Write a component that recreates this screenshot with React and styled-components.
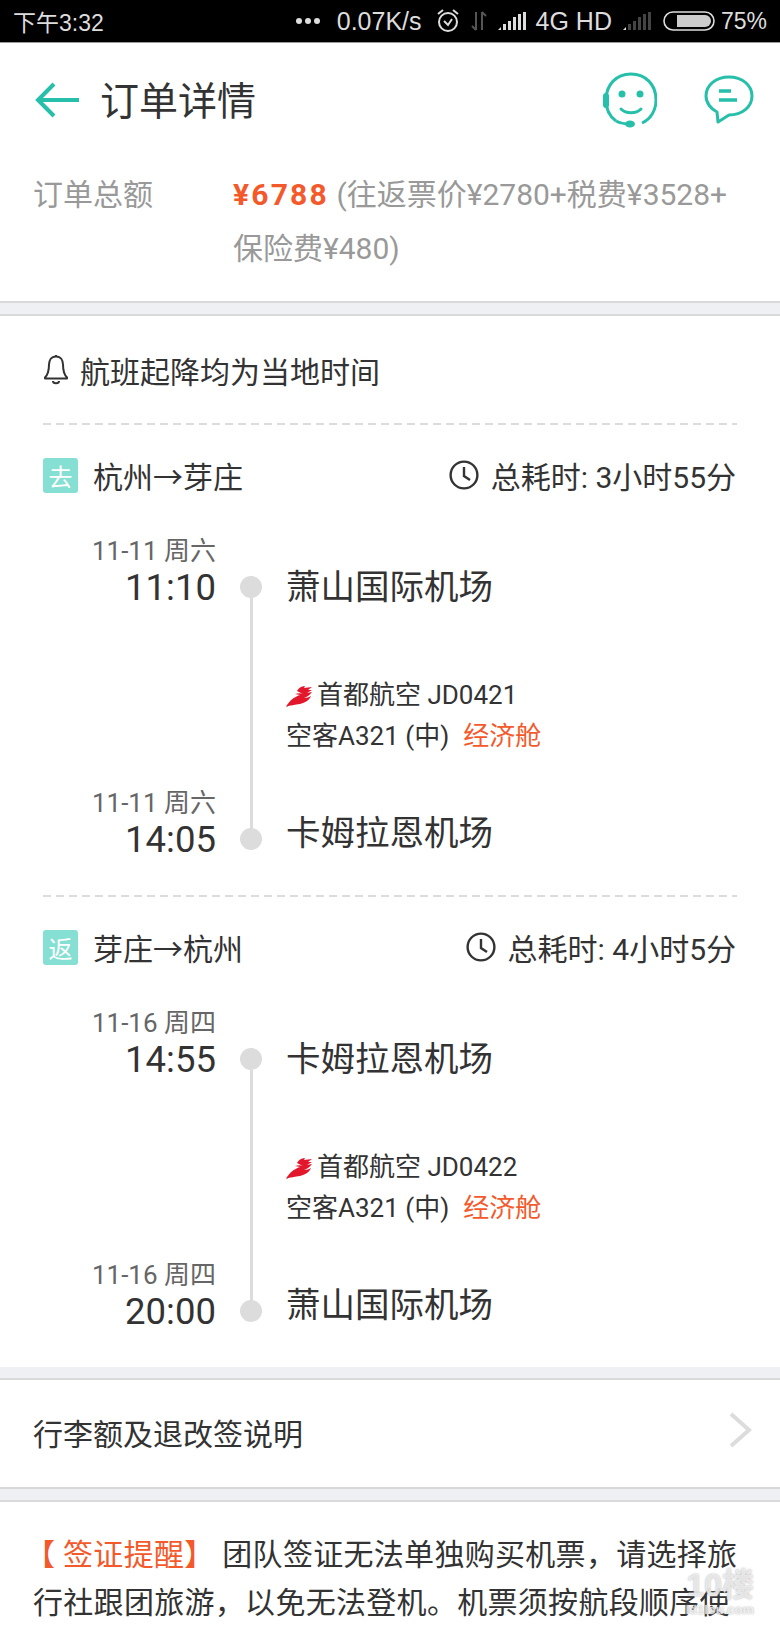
import React from 'react';
import styled, { createGlobalStyle } from 'styled-components';

const GlobalStyle = createGlobalStyle`
  html, body {
    margin: 0;
    padding: 0;
    background: #fff;
    height: 1625px;
    overflow: hidden;
  }
  body {
    font-family: Roboto, "Noto Sans CJK SC", sans-serif;
  }
`;

const TEAL = '#26bfa9';
const ORANGE = '#f4592b';

const Page = styled.div`
  position: relative;
  width: 780px;
  height: 1625px;
  overflow: hidden;
  background: #fff;
  color: #333;
`;

const StatusBar = styled.div`
  height: 43px;
  box-sizing: border-box;
  background: #000;
  border-bottom: 1px solid #999;
  display: flex;
  align-items: center;
  justify-content: space-between;
  padding: 0 13px;
  color: #ddd;
  font-size: 23px;
  font-family: "Liberation Sans", "Noto Sans CJK SC", sans-serif;
`;

const StatusRight = styled.div`
  display: flex;
  align-items: center;
  gap: 10px;
`;

const StatusText = styled.span`
  font-size: ${p => p.$big ? 25 : 23}px;
  margin: ${p => p.$margin || 0};
  white-space: nowrap;
`;

const Header = styled.header`
  height: 114px;
  display: flex;
  align-items: center;
  padding: 0 26px 0 35px;
`;

const Title = styled.h1`
  margin: 0 0 4px 21px;
  font-size: 39px;
  font-weight: 400;
  color: #333;
  flex: 1;
`;

const HeaderIcons = styled.div`
  display: flex;
  align-items: center;
  gap: 47px;
`;

const Total = styled.section`
  display: grid;
  grid-template-columns: 200px 1fr;
  padding: 11px 25px 25px 33px;
  font-size: 30px;
  line-height: 54px;
  color: #999;
`;

const Price = styled.b`
  color: ${ORANGE};
  font-weight: 700;
  letter-spacing: 2.2px;
`;

const Divider = styled.div`
  height: ${p => p.$h || 15}px;
  box-sizing: border-box;
  background: #eef0f3;
  border-top: ${p => p.$top ? '2px solid #d9d9d9' : 'none'};
  border-bottom: ${p => p.$bottom ? '2px solid #d9d9d9' : 'none'};
`;

const Flights = styled.section`
  padding: 0 43px;
`;

const Notice = styled.div`
  height: 107px;
  display: flex;
  align-items: center;
  gap: 11px;
  font-size: 30px;
  color: #333;
`;

const Dashed = styled.div`
  height: 2px;
  background: repeating-linear-gradient(to right, #dcdcdc 0 8px, transparent 8px 13px);
`;

const Leg = styled.div`
  height: 472px;
`;

const LegHead = styled.div`
  display: flex;
  align-items: center;
  justify-content: space-between;
  height: 35px;
  margin: 32px 0 45px;
`;

const Route = styled.div`
  display: flex;
  align-items: center;
  gap: 15px;
  font-size: 30px;
`;

const Badge = styled.span`
  width: 35px;
  height: 35px;
  margin-top: 1px;
  border-radius: 3px;
  background: #85e0d3;
  color: #fff;
  font-size: 24px;
  display: flex;
  align-items: center;
  justify-content: center;
`;

const Duration = styled.div`
  display: flex;
  align-items: center;
  gap: 12px;
  font-size: 30px;
  margin-right: 1px;
`;

const Timeline = styled.div`
  display: flex;
  height: 326px;
`;

const TimeCol = styled.div`
  width: 173px;
  display: flex;
  flex-direction: column;
  justify-content: space-between;
  text-align: right;
`;

const DateText = styled.div`
  font-size: 26px;
  line-height: 28px;
  color: #666;
`;

const TimeText = styled.div`
  font-size: 36.5px;
  line-height: 46px;
  color: #333;
`;

const Rail = styled.div`
  width: 70px;
  flex: none;
  display: flex;
  flex-direction: column;
  align-items: center;
  padding: 39px 0 13px;
  box-sizing: border-box;
`;

const Dot = styled.span`
  flex: none;
  width: 22px;
  height: 22px;
  border-radius: 50%;
  background: #dcdcdc;
`;

const RailLine = styled.span`
  flex: 1;
  width: 3px;
  background: #dcdcdc;
`;

const InfoCol = styled.div`
  flex: 1;
  display: flex;
  flex-direction: column;
  justify-content: space-between;
  padding: 27px 0 7px;
`;

const Airport = styled.div`
  font-size: 34.5px;
  line-height: 46px;
  color: #333;
`;

const Transit = styled.div`
  margin-top: 12px;
  font-size: 26px;
  line-height: 41px;
  color: #333;
`;

const Airline = styled.div`
  display: flex;
  align-items: center;
  gap: 5px;
`;

const Cabin = styled.span`
  color: ${ORANGE};
  margin-left: 14px;
`;

const LinkRow = styled.div`
  height: 107px;
  box-sizing: border-box;
  padding: 0 28px 3px 33px;
  display: flex;
  align-items: center;
  justify-content: space-between;
  font-size: 30px;
  color: #333;
`;

const ChevronSvg = styled.svg`
  margin-bottom: 4px;
`;

const Visa = styled.section`
  padding: 29px 25px 0 33px;
  font-size: 30px;
  line-height: 48px;
  letter-spacing: 0.3px;
  color: #333;
`;

const VisaTag = styled.span`
  color: ${ORANGE};
  margin-left: -8px;
`;

const Watermark = styled.div`
  position: absolute;
  right: 26px;
  bottom: 9px;
  color: rgba(255, 255, 255, 0.7);
  text-shadow: 0 0 2px rgba(160, 160, 160, 0.9);
  text-align: right;
  font-family: "Liberation Sans", sans-serif;
  font-weight: 700;
  line-height: 1;
`;

const MarkBig = styled.div`
  font-size: 32px;
  font-family: "Liberation Sans", "Noto Sans CJK SC", sans-serif;
`;

const MarkSmall = styled.div`
  font-size: 13px;
  margin-top: 2px;
`;

const BatterySvg = styled.svg`
  margin: 0 -4px 0 2px;
`;

const BackIcon = () => (
  <svg width="44" height="36" viewBox="0 0 44 36" fill="none" stroke={TEAL} strokeWidth="4">
    <path d="M44 18H3M19 2 3 18l16 16" />
  </svg>
);

const AgentIcon = () => (
  <svg width="54" height="56" viewBox="0 0 54 56" fill="none" stroke={TEAL} strokeWidth="3">
    <path d="M13 49C6 44 3 36 3 28 3 13 13 2 28 2s25 11 25 26c0 10-5 19-14 23" />
    <path d="M18 37c5 5 15 5 20 0" strokeLinecap="round" />
    <circle cx="19" cy="22" r="3.5" fill={TEAL} stroke="none" />
    <circle cx="37" cy="22" r="3.5" fill={TEAL} stroke="none" />
    <rect x="0" y="21" width="6" height="15" rx="3" fill={TEAL} stroke="none" />
    <path d="M13 49c4 2 8 3 14 3" />
    <ellipse cx="27" cy="52" rx="5" ry="3.5" fill={TEAL} stroke="none" />
  </svg>
);

const ChatIcon = () => (
  <svg width="50" height="50" viewBox="0 0 50 50" fill="none" stroke={TEAL} strokeWidth="3">
    <path d="M25 2C12 2 2 10 2 21c0 7 5 13 11 16l1 10 11-7c13 0 23-8 23-19S38 2 25 2z" strokeLinejoin="round" />
    <path d="M15 16h12M15 25h18" strokeWidth="3.5" />
  </svg>
);

const BellIcon = () => (
  <svg width="26" height="32" viewBox="0 0 26 32" fill="none" stroke="#333" strokeWidth="2">
    <path d="M13 2.5c-5 0-7 4-7 8 0 7-1 10-4 13v1h22v-1c-3-3-4-6-4-13 0-4-2-8-7-8z" strokeLinejoin="round" />
    <path d="M13 1v2M10 27c0 3 6 3 6 0" />
  </svg>
);

const ClockIcon = () => (
  <svg width="30" height="30" viewBox="0 0 30 30" fill="none" stroke="#333" strokeWidth="2.4">
    <circle cx="15" cy="15" r="13.4" />
    <path d="M15 7v9l6 4" />
  </svg>
);

const AirlineLogo = () => (
  <svg width="26" height="22" viewBox="0 0 26 22">
    <path fill="#e3172c" d="M0 22c3-6 8-10 14-12l-5-1c3-1 6-1 8 0l-6-3c1-2 4-5 8-5l-1 2 8-1-4 3 4 0-5 3 5-1c-2 3-5 5-8 6 3 0 5-1 7-2-2 5-7 7-11 8-5 1-10 1-14 3z" />
  </svg>
);

const Chevron = () => (
  <ChevronSvg width="24" height="36" viewBox="0 0 24 36" fill="none" stroke="#dcdcdc" strokeWidth="4">
    <path d="M3 2l18 16L3 34" />
  </ChevronSvg>
);

const Dots = () => (
  <svg width="26" height="8" viewBox="0 0 26 8" fill="#ddd">
    <circle cx="4" cy="4" r="3" /><circle cx="13" cy="4" r="3" /><circle cx="22" cy="4" r="3" />
  </svg>
);

const Alarm = () => (
  <svg width="24" height="26" viewBox="0 0 24 26" fill="none" stroke="#ddd" strokeWidth="2">
    <circle cx="12" cy="14" r="9" />
    <path d="M8 13l4 4 4-6M2 6l5-4M22 6l-5-4" />
  </svg>
);

const DataArrows = () => (
  <svg width="18" height="22" viewBox="0 0 18 22" fill="none" stroke="#555" strokeWidth="2">
    <path d="M6 2v18M2 16l4 4M12 20V2M12 2l4 4" />
  </svg>
);

const Signal = ({ dim }) => (
  <svg width="28" height="18" viewBox="0 0 28 18" fill={dim ? '#444' : '#ddd'}>
    <path d="M0 18l3-3v3z" fill="#ddd" />
    <rect x="5" y="12" width="3" height="6" />
    <rect x="10" y="9" width="3" height="9" />
    <rect x="15" y="5" width="3" height="13" />
    <rect x="20" y="2" width="3" height="16" />
    <rect x="25" y="0" width="3" height="18" />
  </svg>
);

const Battery = () => (
  <BatterySvg width="52" height="20" viewBox="0 0 52 20">
    <rect x="1" y="1" width="50" height="18" rx="9" fill="none" stroke="#ddd" strokeWidth="1.6" />
    <path d="M14 4h28a6 6 0 0 1 0 12H14z" fill="#ccc" />
  </BatterySvg>
);

const legs = [
  {
    tag: '去',
    route: '杭州→芽庄',
    total: '总耗时: 3小时55分',
    from: { date: '11-11 周六', time: '11:10', name: '萧山国际机场' },
    to: { date: '11-11 周六', time: '14:05', name: '卡姆拉恩机场' },
    flight: 'JD0421',
  },
  {
    tag: '返',
    route: '芽庄→杭州',
    total: '总耗时: 4小时5分',
    from: { date: '11-16 周四', time: '14:55', name: '卡姆拉恩机场' },
    to: { date: '11-16 周四', time: '20:00', name: '萧山国际机场' },
    flight: 'JD0422',
  },
];

const FlightLeg = ({ leg }) => (
  <Leg>
    <Dashed />
    <LegHead>
      <Route>
        <Badge>{leg.tag}</Badge>
        {leg.route}
      </Route>
      <Duration>
        <ClockIcon />
        {leg.total}
      </Duration>
    </LegHead>
    <Timeline>
      <TimeCol>
        <div>
          <DateText>{leg.from.date}</DateText>
          <TimeText>{leg.from.time}</TimeText>
        </div>
        <div>
          <DateText>{leg.to.date}</DateText>
          <TimeText>{leg.to.time}</TimeText>
        </div>
      </TimeCol>
      <Rail>
        <Dot />
        <RailLine />
        <Dot />
      </Rail>
      <InfoCol>
        <Airport>{leg.from.name}</Airport>
        <Transit>
          <Airline>
            <AirlineLogo />
            首都航空 {leg.flight}
          </Airline>
          空客A321 (中)<Cabin>经济舱</Cabin>
        </Transit>
        <Airport>{leg.to.name}</Airport>
      </InfoCol>
    </Timeline>
  </Leg>
);

export default function App() {
  return (
    <Page>
      <GlobalStyle />
      <StatusBar>
        <StatusText>下午3:32</StatusText>
        <StatusRight>
          <Dots />
          <StatusText $big $margin="0 4px 0 6px">0.07K/s</StatusText>
          <Alarm />
          <DataArrows />
          <Signal />
          <StatusText $big $margin="0 1px 0 0">4G HD</StatusText>
          <Signal dim />
          <Battery />
          <StatusText>75%</StatusText>
        </StatusRight>
      </StatusBar>
      <Header>
        <BackIcon />
        <Title>订单详情</Title>
        <HeaderIcons>
          <AgentIcon />
          <ChatIcon />
        </HeaderIcons>
      </Header>
      <Total>
        <span>订单总额</span>
        <div>
          <Price>¥6788</Price> (往返票价¥2780+税费¥3528+<br />保险费¥480)
        </div>
      </Total>
      <Divider $top $bottom />
      <Flights>
        <Notice>
          <BellIcon />
          航班起降均为当地时间
        </Notice>
        {legs.map(leg => <FlightLeg key={leg.flight} leg={leg} />)}
      </Flights>
      <Divider $h={13} $bottom />
      <LinkRow>
        行李额及退改签说明
        <Chevron />
      </LinkRow>
      <Divider $top $bottom />
      <Visa>
        <VisaTag>【 签证提醒】</VisaTag> 团队签证无法单独购买机票，请选择旅行社跟团旅游，以免无法登机。机票须按航段顺序使
      </Visa>
      <Watermark>
        <MarkBig>10楼</MarkBig>
        <MarkSmall>ld1lou.com</MarkSmall>
      </Watermark>
    </Page>
  );
}
